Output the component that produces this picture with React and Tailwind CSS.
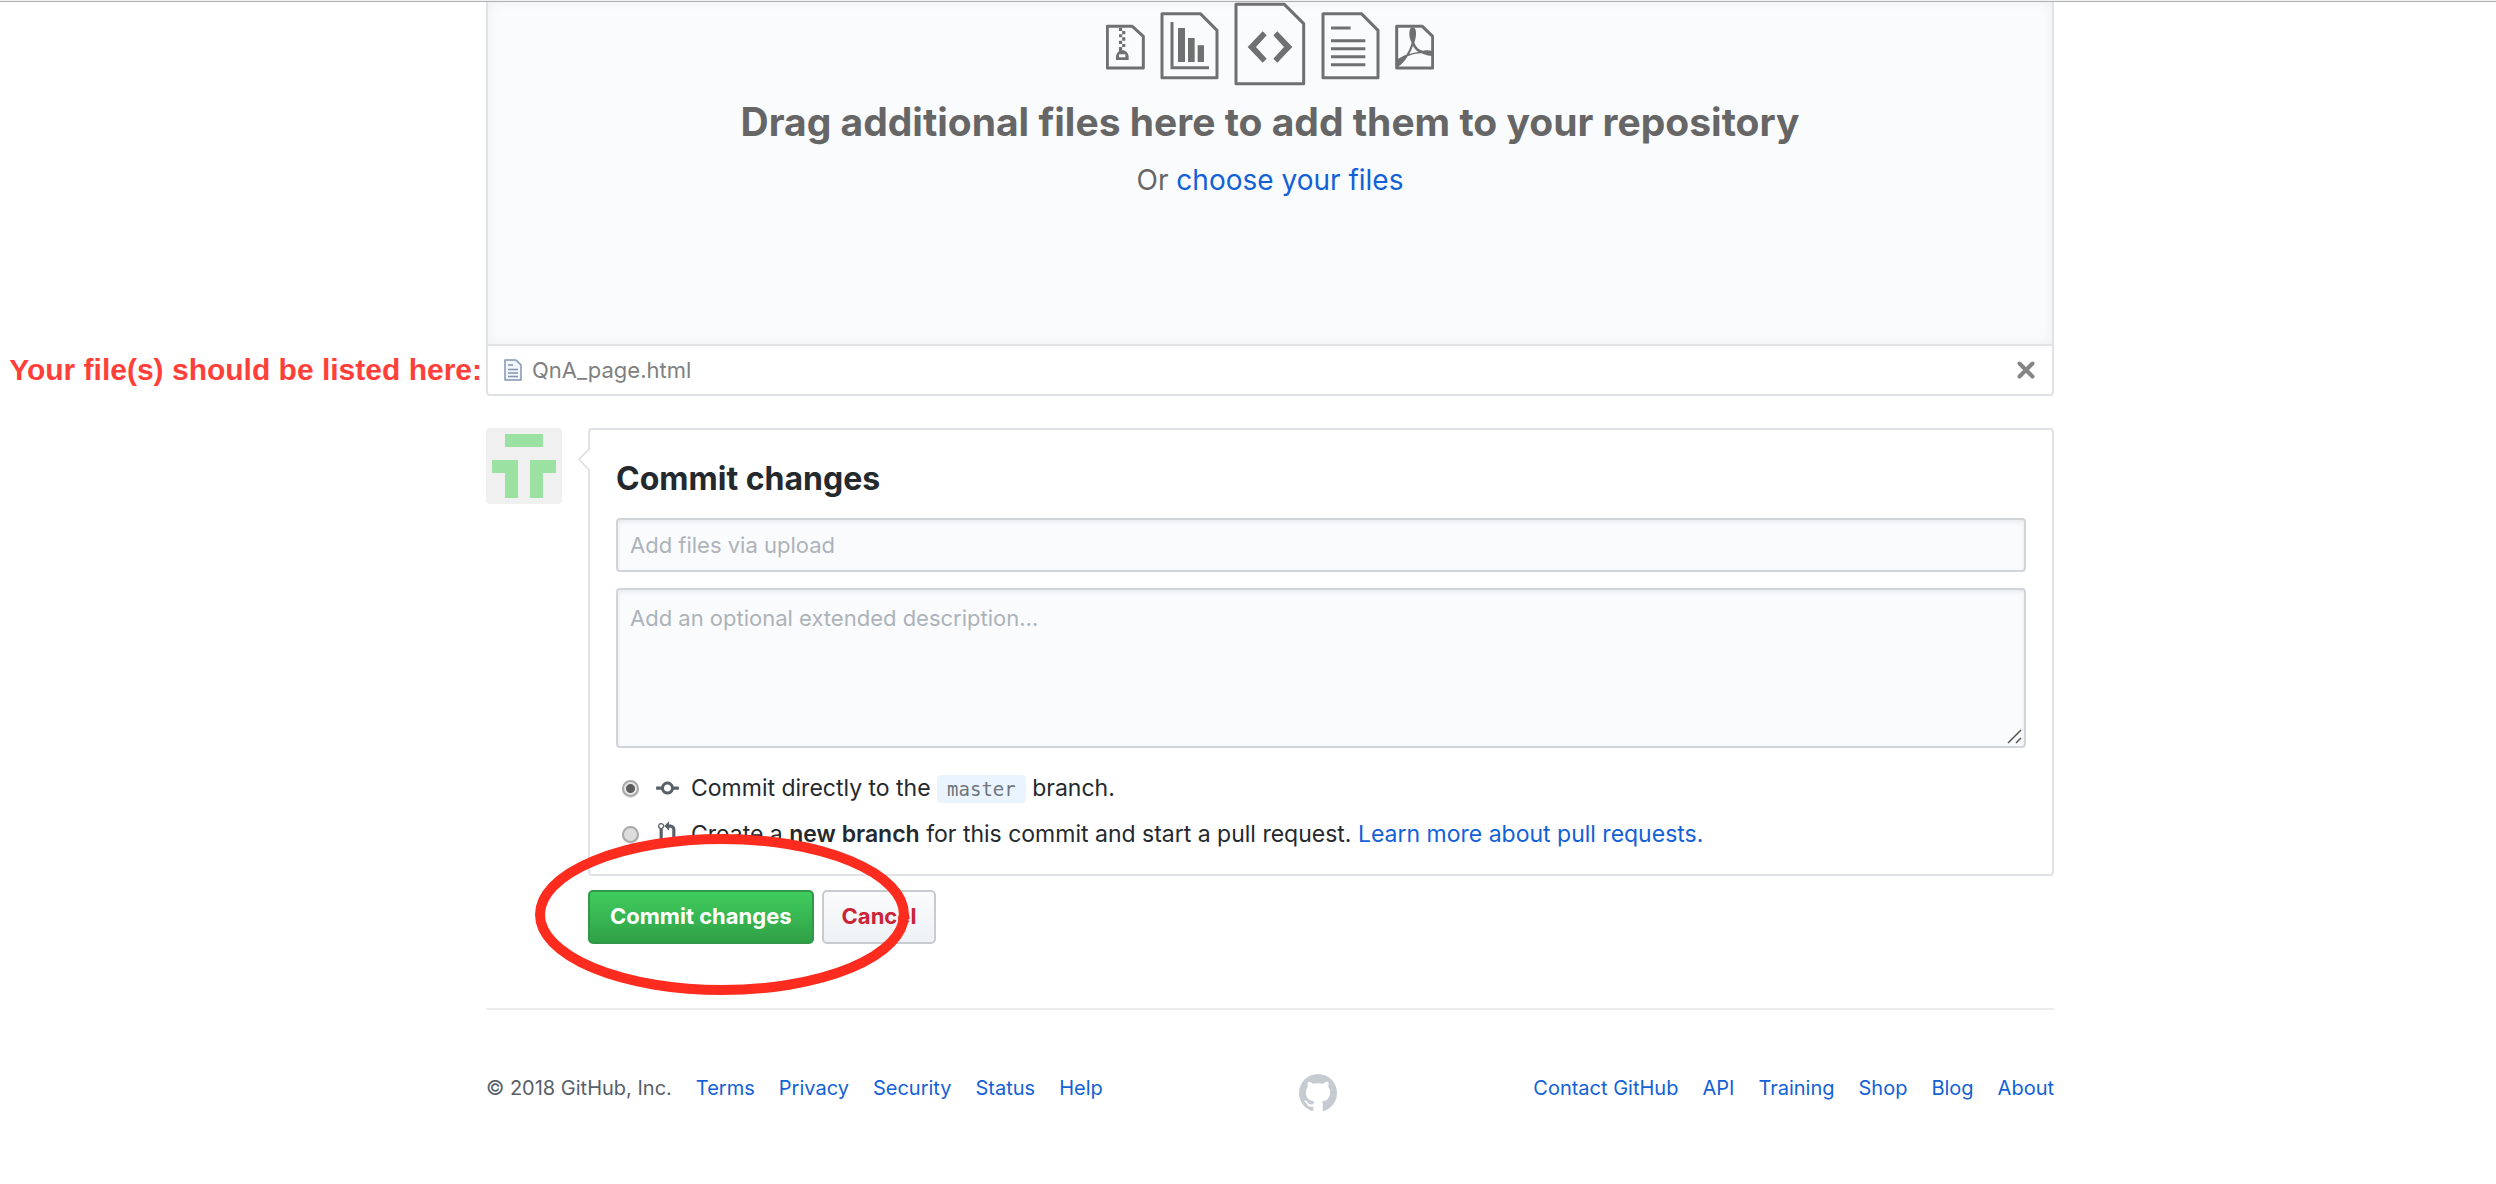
import React from "react";

function FileTypeIcons() {
  return (
    <svg width="328" height="84" viewBox="48 6 984 252" fill="none" stroke="#707070" strokeWidth="9" strokeLinejoin="round" aria-hidden="true">
      {/* archive */}
      <path d="M52 79H127L160 109V204H52Z" />
      <path
        stroke="none"
        fill="#707070"
        d="M87 83h9.500v10h-9.500zM96.500 93h9.500v10h-9.500zM87 103h9.500v9h-9.500zM96.500 112h9.500v10h-9.500zM87 122h9.500v10h-9.500zM96.500 132h9.500v9h-9.500zM87 141h9.500v12h-9.500z"
      />
      <path
        stroke="none"
        fill="#707070"
        fillRule="evenodd"
        d="M78 180V168Q82 151 97 151Q112 151 116 168V180ZM87 163V172H106V163Z"
      />
      {/* chart */}
      <path d="M216 41H331L381 91V233H216Z" />
      <path d="M246 66V203H357" strokeLinejoin="miter" />
      <path stroke="none" fill="#707070" d="M264 84h21v102h-21zM294 114h20v72h-20zM323 136h19v50h-19z" />
      {/* code */}
      <path d="M438 13H583L641 71V251H438Z" />
      <path stroke="none" fill="#707070" d="M518 94L530 106L498 141L530 176L518 188L473 141ZM562 94L550 106L582 141L550 176L562 188L607 141Z" />
      {/* text */}
      <path d="M699 41H814L864 91V233H699Z" />
      <path d="M723 84H782M723 122H826M723 146H826M723 170H826M723 194H826" />
      {/* pdf */}
      <path d="M920 79H997L1028 109V204H920Z" />
      <path
        stroke="none"
        fill="#707070"
        d="M968 82C976 82 979 92 978 104C977 114 975 122 973 128C979 142 988 151 1000 152C1010 150 1020 151 1028 153V168C1016 168 1004 165 994 160C980 160 966 163 953 169C944 184 934 195 922 202V178C931 172 941 167 949 164C957 152 962 139 965 128C961 120 958 112 958 102C958 90 961 82 968 82ZM969 137C966 146 962 154 958 162C967 159 976 157 985 156C978 151 973 145 969 137Z"
      />
    </svg>
  );
}

function FileIcon() {
  return (
    <svg width="18" height="22" viewBox="0 0 18 22" fill="#f2f5f9" stroke="#8095b3" strokeWidth="1.500" strokeLinejoin="round" aria-hidden="true">
      <path d="M1 1H12L17 6V21H1Z" />
      <path d="M4 6H9M4 10.500H14M4 14H14M4 17.500H14" />
    </svg>
  );
}

function Identicon() {
  return (
    <svg className="size-[76px] shrink-0 rounded-[4px] bg-[#f0f0f0]" viewBox="0 0 76 76" fill="#9be2a2" role="img" aria-label="Your avatar">
      <path d="M19 6H57V19H19ZM6 32H32V70H19V45H6ZM44 32H70V45H57V70H44Z" />
    </svg>
  );
}

function CommitIcon() {
  return (
    <svg width="23" height="26" viewBox="0 0 14 16" fill="#586069" aria-hidden="true">
      <path d="M10.860 7c-.45-1.720-2-3-3.860-3-1.860 0-3.410 1.280-3.860 3H0v2h3.140c.45 1.720 2 3 3.860 3 1.860 0 3.410-1.280 3.860-3H14V7h-3.140zM7 10.200c-1.220 0-2.200-.98-2.200-2.200 0-1.220.98-2.200 2.200-2.200 1.220 0 2.200.98 2.200 2.200 0 1.220-.98 2.200-2.200 2.200z" />
    </svg>
  );
}

function PullRequestIcon() {
  return (
    <svg width="19" height="26" viewBox="0 0 12 16" fill="#586069" aria-hidden="true">
      <path d="M11 11.280V5c-.03-.78-.34-1.470-.94-2.060C9.460 2.350 8.780 2.030 8 2H7V0L4 3l3 3V4h1c.27.02.48.11.69.31.21.2.3.42.31.69v6.280A1.993 1.993 0 0 0 10 15a1.993 1.993 0 0 0 1-3.720zm-1 2.920c-.66 0-1.200-.55-1.200-1.200 0-.65.55-1.200 1.200-1.200.65 0 1.200.55 1.200 1.200 0 .65-.55 1.200-1.200 1.200zM4 3c0-1.110-.89-2-2-2a1.993 1.993 0 0 0-1 3.720v6.560A1.993 1.993 0 0 0 2 15a1.993 1.993 0 0 0 1-3.720V4.720c.59-.34 1-.98 1-1.720zm-.8 10c0 .66-.55 1.200-1.200 1.200-.65 0-1.200-.55-1.200-1.200 0-.65.55-1.200 1.200-1.200.65 0 1.200.55 1.200 1.200zM2 4.200C1.340 4.200.8 3.650.8 3c0-.65.55-1.200 1.200-1.200.65 0 1.200.55 1.200 1.200 0 .65-.55 1.200-1.200 1.200z" />
    </svg>
  );
}

function GitHubMark() {
  return (
    <svg width="38" height="38" viewBox="0 0 16 16" fill="#c6cbd1" aria-hidden="true">
      <path
        fillRule="evenodd"
        d="M8 0C3.580 0 0 3.580 0 8c0 3.540 2.290 6.530 5.470 7.590.4.07.55-.17.55-.38 0-.19-.01-.82-.01-1.490-2.010.37-2.530-.49-2.690-.94-.09-.23-.48-.94-.82-1.130-.28-.15-.68-.52-.01-.53.63-.01 1.080.58 1.230.82.72 1.210 1.870.87 2.330.66.07-.52.28-.87.51-1.070-1.780-.2-3.640-.89-3.640-3.950 0-.87.31-1.590.82-2.150-.08-.2-.36-1.020.08-2.120 0 0 .67-.21 2.200.82.64-.18 1.320-.27 2-.27.68 0 1.360.09 2 .27 1.530-1.040 2.200-.82 2.200-.82.44 1.100.16 1.920.08 2.120.51.56.82 1.270.82 2.150 0 3.070-1.870 3.750-3.650 3.950.29.25.54.73.54 1.480 0 1.070-.01 1.930-.01 2.200 0 .21.15.46.55.38A8.013 8.013 0 0 0 16 8c0-4.420-3.580-8-8-8z"
      />
    </svg>
  );
}

function Uploader() {
  return (
    <section className="rounded-b-[4px] border-2 border-t-0 border-[#dfe2e6] text-[22px] text-[#666666]">
      <div className="flex flex-col items-center border-b-2 border-[#e2e4e8] bg-[#fafbfd] pb-[146px] shadow-[inset_0_0_12px_rgba(27,31,35,0.06)]">
        <FileTypeIcons />
        <h2 className="mt-3 text-center text-[39px] font-bold leading-[48px]">
          Drag additional files here to add them to your repository
        </h2>
        <p className="mt-4 text-[28px] leading-9">
          Or{" "}
          <a href="#choose" className="text-[#1261d6]">
            choose your files
          </a>
        </p>
      </div>
      <div className="relative flex h-12 items-center pl-4 pr-[17px] text-[#808080]">
        <strong className="absolute right-full mr-1.5 whitespace-nowrap pb-0.5 font-['Liberation_Sans',sans-serif] text-[30px] font-bold text-[#ff3f39]">
          Your file(s) should be listed here:
        </strong>
        <FileIcon />
        <span className="ml-2.5">QnA_page.html</span>
        <button type="button" aria-label="Remove QnA_page.html" className="ml-auto">
          <svg width="18" height="18" viewBox="0 0 18 18" stroke="#858585" strokeWidth="4" strokeLinecap="round">
            <path d="M2.500 2.500L15.500 15.500M15.500 2.500L2.500 15.500" />
          </svg>
        </button>
      </div>
    </section>
  );
}

const fieldClass =
  "block w-full rounded-[4px] border-2 border-[#d1d5da] bg-[#fafbfd] px-3 text-[22px] leading-8 text-[#24292e] shadow-[inset_0_2px_4px_rgba(27,31,35,0.08)] placeholder:text-[#adb3b9] focus:outline-none";

const radioClass =
  "ml-1.5 size-[17px] shrink-0 appearance-none rounded-full border-2 border-[#a9a9a9] bg-[#dddddd] shadow-[0_1px_1px_rgba(0,0,0,0.12)] checked:bg-[radial-gradient(circle,#5c5c5c_0_4px,#e4e4e4_5px)]";

function CommitBox() {
  return (
    <div className="relative min-w-0 flex-1 rounded-[4px] border-2 border-[#dfe3e8] px-[26px] pb-6 pt-[29px]">
      <svg className="absolute -left-[12px] top-[17px]" width="13" height="26" viewBox="0 0 13 26" aria-hidden="true">
        <path d="M13 0V26L1 13Z" fill="#ffffff" />
        <path d="M12 1L1 12.500L12 24" fill="none" stroke="#dadde0" strokeWidth="1.500" />
      </svg>
      <h3 className="text-[32px] font-bold leading-10 text-[#24292e]">Commit changes</h3>
      <input type="text" aria-label="Commit summary" placeholder="Add files via upload" className={`mt-[19px] h-[54px] ${fieldClass}`} />
      <div className="relative mt-4">
        <textarea
          aria-label="Extended description"
          placeholder="Add an optional extended description…"
          className={`h-40 resize-none pt-3 ${fieldClass}`}
        />
        <svg className="absolute bottom-1 right-1" width="15" height="15" viewBox="0 0 15 15" stroke="#555555" strokeWidth="1.500" aria-hidden="true">
          <path d="M1 14L14 1M9 14L14 9" />
        </svg>
      </div>
      <div className="mt-6 flex flex-col gap-3.5 text-[23px] leading-8 text-[#24292e]">
        <div className="flex items-center">
          <input type="radio" id="direct" name="target" defaultChecked className={radioClass} />
          <span className="ml-4 flex w-6 justify-center">
            <CommitIcon />
          </span>
          <label htmlFor="direct" className="ml-3">
            Commit directly to the{" "}
            <code className="rounded-[4px] bg-[#eaf4ff] px-2.5 py-[3px] font-['DejaVu_Sans_Mono',monospace] text-[19px] leading-5 text-[#6f757b]">
              master
            </code>{" "}
            branch.
          </label>
        </div>
        <div className="flex items-center">
          <input type="radio" id="pull" name="target" className={radioClass} />
          <span className="ml-4 flex w-6 justify-center">
            <PullRequestIcon />
          </span>
          <p className="ml-3">
            <label htmlFor="pull">
              Create a <strong className="font-semibold">new branch</strong> for this commit and start a pull request.
            </label>{" "}
            <a href="#learn" className="text-[#1261d6]">
              Learn more about pull requests.
            </a>
          </p>
        </div>
      </div>
    </div>
  );
}

function Actions() {
  return (
    <div className="relative ml-[102px] mt-3.5 flex gap-2 text-[22px] font-bold">
      <button
        type="submit"
        className="h-[54px] rounded-[5px] border-2 border-[#31984a] bg-gradient-to-b from-[#40cd5e] to-[#2fa146] px-5 pb-0.5 text-white"
      >
        Commit changes
      </button>
      <button
        type="button"
        className="h-[54px] rounded-[5px] border-2 border-[#c8cbcf] bg-gradient-to-b from-[#fafbfc] to-[#eef2f5] px-[18px] pb-0.5 text-[#cb2436]"
      >
        Cancel
      </button>
      <svg className="pointer-events-none absolute -left-[53px] -top-14" width="374" height="161" viewBox="0 0 374 161" aria-hidden="true">
        <ellipse cx="187" cy="80.500" rx="182" ry="75.500" fill="none" stroke="#fd2c1e" strokeWidth="10" />
      </svg>
    </div>
  );
}

function FooterLinks({ items }) {
  return items.map((item) => (
    <a key={item} href={`#${item.toLowerCase().replace(" ", "-")}`} className="text-[#1261d6]">
      {item}
    </a>
  ));
}

function Footer() {
  return (
    <footer className="mt-16 flex items-start justify-between border-t-2 border-[#eaecef] pt-16 text-[20px] leading-7">
      <nav aria-label="Legal" className="flex gap-6">
        <span className="text-[#586069]">© 2018 GitHub, Inc.</span>
        <FooterLinks items={["Terms", "Privacy", "Security", "Status", "Help"]} />
      </nav>
      <a href="#home" aria-label="GitHub">
        <GitHubMark />
      </a>
      <nav aria-label="Company" className="flex gap-6">
        <FooterLinks items={["Contact GitHub", "API", "Training", "Shop", "Blog", "About"]} />
      </nav>
    </footer>
  );
}

export default function App() {
  return (
    <div className="bg-white font-['Inter',sans-serif]">
      <div className="h-0.5 border-b border-[#b2b2b2] bg-[#f0f0f0]" />
      <main className="pl-11">
        <div className="mx-auto max-w-[1568px]">
          <Uploader />
          <form className="mt-8" onSubmit={(e) => e.preventDefault()}>
            <div className="flex items-start gap-[26px]">
              <Identicon />
              <CommitBox />
            </div>
            <Actions />
          </form>
          <Footer />
        </div>
      </main>
    </div>
  );
}
